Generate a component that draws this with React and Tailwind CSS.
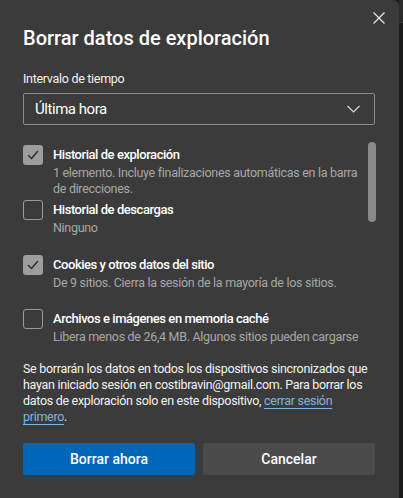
import React from "react";

function Check({ checked }) {
  if (checked) {
    return (
      <div className="w-5 h-5 rounded-[3px] bg-[#9d9d9d] flex items-center justify-center shrink-0">
        <svg width="14" height="14" viewBox="0 0 14 14" fill="none">
          <path d="M2.5 7.5 L5.5 10.5 L11.5 3.5" stroke="#2b2b2b" strokeWidth="1.4" strokeLinecap="round" strokeLinejoin="round" />
        </svg>
      </div>
    );
  }
  return <div className="w-5 h-5 rounded-[3px] border border-[#9a9a9a] shrink-0" />;
}

const items = [
  { label: "Historial de exploración", desc: "1 elemento. Incluye finalizaciones automáticas en la barra de direcciones.", checked: true, pad: "pt-0" },
  { label: "Historial de descargas", desc: "Ninguno", checked: false, pad: "pt-[3px]" },
  { label: "Cookies y otros datos del sitio", desc: "De 9 sitios. Cierra la sesión de la mayoría de los sitios.", checked: true, pad: "pt-[19px]" },
  { label: "Archivos e imágenes en memoria caché", desc: "Libera menos de 26,4 MB. Algunos sitios pueden cargarse más lentamente en tu próxima visita.", checked: false, pad: "pt-[18px]" },
];

export default function App() {
  return (
    <div className="flex w-[403px] h-[498px] bg-[#1c1c1c] overflow-hidden" style={{ fontFamily: 'Roboto, "Noto Sans", sans-serif' }}>
      <div className="w-[399px] h-full bg-[#3b3b3b] rounded-tr-[6px] flex flex-col px-[23px] relative text-white shrink-0">
        <button className="absolute right-[14px] top-[12px] w-[12px] h-[12px]">
          <svg width="12" height="12" viewBox="0 0 12 12" fill="none">
            <path d="M0.5 0.5 L11.5 11.5 M11.5 0.5 L0.5 11.5" stroke="#e8e8e8" strokeWidth="1.2" />
          </svg>
        </button>

        <h1 className="mt-[24px] text-[20px] leading-[28px] font-medium">Borrar datos de exploración</h1>

        <div className="mt-[18px] text-[12.5px] leading-[18px] tracking-[-0.3px] text-[#f0f0f0]">Intervalo de tiempo</div>

        <div className="mt-[5px] h-[32px] w-[352px] border border-[#8c8c8c] rounded-[2px] flex items-center justify-between pl-[11px] pr-[14px]">
          <span className="text-[15px] tracking-[-0.45px]">Última hora</span>
          <svg width="13" height="8" viewBox="0 0 13 8" fill="none">
            <path d="M0.5 1 L6.5 7 L12.5 1" stroke="#d8d8d8" strokeWidth="1.2" />
          </svg>
        </div>

        <div className="mt-[14px] h-[206px] overflow-hidden relative pt-[6px]">
          <div className="absolute right-[0px] top-[3px] w-[8px] h-[80px] rounded-full bg-[#8a8a8a]" />
          <div className="flex flex-col pr-[16px]">
            {items.map((it, i) => (
              <div key={i} className={"flex gap-[10px] " + it.pad}>
                <Check checked={it.checked} />
                <div className="flex flex-col">
                  <div className="text-[13px] leading-[20px] font-medium tracking-[-0.45px]">{it.label}</div>
                  <div className="text-[12.5px] leading-[16px] tracking-[-0.3px] text-[#a8a8a8]">{it.desc}</div>
                </div>
              </div>
            ))}
          </div>
        </div>

        <p className="mt-[16px] text-[12.5px] leading-[16px] tracking-[-0.3px] text-[#f2f2f2]">
          Se borrarán los datos en todos los dispositivos sincronizados que hayan iniciado sesión en costibravin@gmail.com. Para borrar los datos de exploración solo en este dispositivo,{" "}
          <a className="text-[#7ab7e8] underline underline-offset-[3px]">cerrar sesión primero</a>.
        </p>

        <div className="mt-[18px] flex gap-[8px]">
          <button className="w-[172px] h-[32px] rounded-[2px] bg-[#0067b8] text-[14px] font-medium">Borrar ahora</button>
          <button className="w-[172px] h-[32px] rounded-[2px] bg-[#4b4b4b] text-[14px] font-medium">Cancelar</button>
        </div>
      </div>
      <div className="flex-1 flex flex-col">
        <div className="h-[23px] bg-[#2b2b2b] border-b border-[#3a3a3a]" />
      </div>
    </div>
  );
}
